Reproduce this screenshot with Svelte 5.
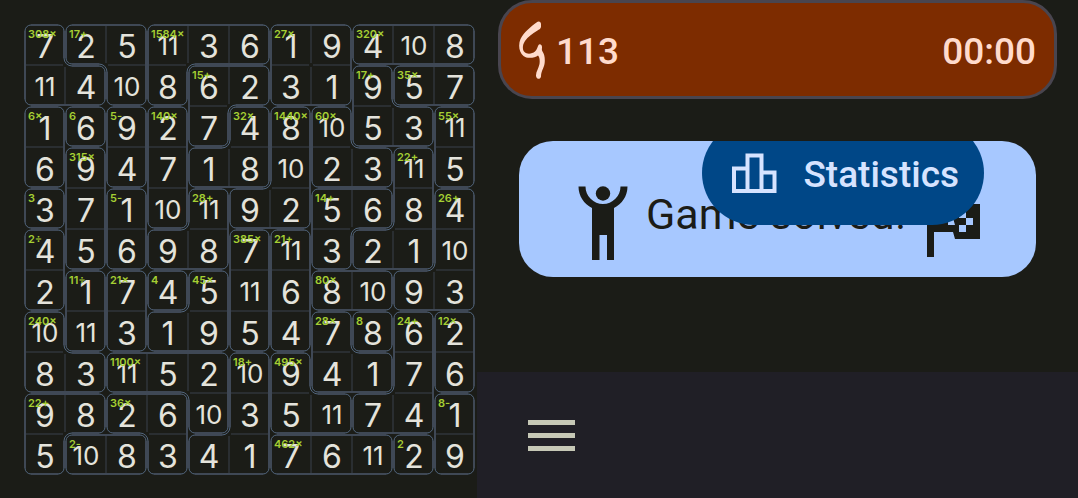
<script>
  const numbers = [
    [7, 2, 5, 11, 3, 6, 1, 9, 4, 10, 8],
    [11, 4, 10, 8, 6, 2, 3, 1, 9, 5, 7],
    [1, 6, 9, 2, 7, 4, 8, 10, 5, 3, 11],
    [6, 9, 4, 7, 1, 8, 10, 2, 3, 11, 5],
    [3, 7, 1, 10, 11, 9, 2, 5, 6, 8, 4],
    [4, 5, 6, 9, 8, 7, 11, 3, 2, 1, 10],
    [2, 1, 7, 4, 5, 11, 6, 8, 10, 9, 3],
    [10, 11, 3, 1, 9, 5, 4, 7, 8, 6, 2],
    [8, 3, 11, 5, 2, 10, 9, 4, 1, 7, 6],
    [9, 8, 2, 6, 10, 3, 5, 11, 7, 4, 1],
    [5, 10, 8, 3, 4, 1, 7, 6, 11, 2, 9],
  ];

  // Each letter is one cage; its first cell in reading order carries the clue.
  const cages = [
    'ABBCCCDDEEE',
    'AABCFFDDGHH',
    'IJKLFMNOGGP',
    'IQKLMMNOORP',
    'SQTLUNNVVRW',
    'XQTUUYZVRRW',
    'XabcdYZeeWW',
    'fabddYZghij',
    'ffkkklmggij',
    'nnooklmmiip',
    'nqqollrrrsp',
  ];

  const clues = {
    A: '308×', B: '17+', C: '1584×', D: '27×', E: '320×', F: '15+', G: '17+', H: '35×',
    I: '6×', J: '6', K: '5-', L: '140×', M: '32×', N: '1440×', O: '60×', P: '55×',
    Q: '315×', R: '22+', S: '3', T: '5-', U: '28+', V: '14+', W: '26+', X: '2÷',
    Y: '385×', Z: '21+', a: '11÷', b: '21×', c: '4', d: '45×', e: '80×', f: '240×',
    g: '28×', h: '8', i: '24+', j: '12×', k: '1100×', l: '18+', m: '495×', n: '22+',
    o: '36×', p: '8-', q: '2-', r: '462×', s: '2',
  };

  const unit = 41;
  const half = unit / 2;
  const radius = 6;
  const d = half - 1;
  const cageAt = (r, c) => cages[r]?.[c] ?? '';

  const cells = [];
  let edges = '';
  let corners = '';
  let dividers = '';
  const seen = new Set();

  for (let r = 0; r < 11; r++) {
    for (let c = 0; c < 11; c++) {
      const id = cageAt(r, c);
      cells.push({ value: numbers[r][c], clue: seen.has(id) ? '' : clues[id] });
      seen.add(id);

      const left = c * unit;
      const top = r * unit;
      const cx = left + half;
      const cy = top + half;
      const same = (dx, dy) => cageAt(r + dy, c + dx) === id;

      // Straight sides, shortened where the outline turns.
      for (const [dx, dy] of [[0, -1], [1, 0], [0, 1], [-1, 0]]) {
        if (same(dx, dy)) continue;
        const px = -dy;
        const py = dx;
        const reach = (s) => {
          const straight = same(px * s, py * s) && !same(px * s + dx, py * s + dy);
          return straight ? half : d - radius;
        };
        const x = cx + dx * d;
        const y = cy + dy * d;
        const a = reach(-1);
        const b = reach(1);
        edges += `M${x - px * a} ${y - py * a}L${x + px * b} ${y + py * b}`;
      }

      for (const [sx, sy] of [[-1, -1], [1, -1], [1, 1], [-1, 1]]) {
        const h = same(sx, 0);
        const v = same(0, sy);
        const outer = !h && !v;
        const inner = h && v && !same(sx, sy);
        if (!outer && !inner) continue;
        const size = outer ? radius : radius + 2;
        const end = outer ? d - size : d + size;
        const sweep = sx * sy > 0 ? 0 : 1;
        corners += `M${cx + sx * end} ${cy + sy * d}A${size} ${size} 0 0 ${sweep} ${cx + sx * d} ${cy + sy * end}`;
      }

      if (same(1, 0)) dividers += `M${left + unit} ${top + 2}v${unit - 4}`;
      if (same(0, 1)) dividers += `M${left + 2} ${top + unit}h${unit - 4}`;
    }
  }
</script>

<main>
  <section class="puzzle" aria-label="Puzzle">
    <div class="board">
      <svg class="lines" viewBox="0 0 451 451" aria-hidden="true">
        <path class="divider" d={dividers} />
        <path class="edge" d={edges} />
        <path class="corner" d={corners} />
      </svg>
      {#each cells as cell}
        <div class="cell">
          <span class="value" class:wide={cell.value > 9}>{cell.value}</span>
          {#if cell.clue}<span class="clue">{cell.clue}</span>{/if}
        </div>
      {/each}
    </div>
  </section>

  <section class="side">
    <header class="status">
      <svg class="mark" viewBox="0 0 28 58" aria-hidden="true">
        <path d="M18.500 1.500C20.500 -0.500 23 0.500 23 3V6C22.500 8 21 8.500 19.500 9.500C14 13 10 15.500 7 20C4 24.500 4.500 29 6.500 31C9 33.500 14 33 17 30.500C19 28.500 19.500 26 20.500 24C21.500 22.500 24 23.500 24 26C24 28 23.500 29 24.500 30.500C26.500 33 27.300 38 26.500 43C25.500 48 23 50 23 55.500C22.500 58.500 19 58.500 18.300 56C17 52 20.500 48 21.500 43C22 39 21.500 36 20 34.500C17 37 9 38 5.500 35C1 31 0 24 2.500 18C6 11 13 5.500 18.500 1.500Z" />
      </svg>
      <span class="count">113</span>
      <time>00:00</time>
    </header>

    <div class="banner">
      <svg class="person" viewBox="0 0 50 74" aria-hidden="true">
        <circle cx="25" cy="7.500" r="7.200" />
        <path d="M0.500 0.500H7.500A17.500 17.500 0 0 0 42.500 0.500H49.500C49.500 10 44 18 36 22V74H29V49H21.500V74H14V22C6 18 0.500 10 0.500 0.500Z" />
      </svg>
      <span class="message">Game solved!</span>
      <svg class="flag" viewBox="0 0 53 53" aria-hidden="true">
        <path fill-rule="evenodd" d="M0 0H25L27 6V0H53V35H28L26 28H7V53H0ZM21 14V21H28L26 14ZM32 7H39V14H32ZM39 14H46V21H39ZM32 21H39V28H32Z" />
      </svg>
      <button class="stats" type="button">
        <svg class="podium" viewBox="0 0 45 41" aria-hidden="true">
          <path d="M2 38V15.500H15.500V2.500H29.500V19.500H42.500V38ZM15.500 15V38M29.500 19V38" />
        </svg>
        <span>Statistics</span>
      </button>
    </div>

    <nav>
      <button class="menu" type="button" aria-label="Menu">
        <i></i><i></i><i></i>
      </button>
    </nav>
  </section>
</main>

<style>
  :global(body) {
    background: #1b1c17;
  }

  main {
    display: grid;
    grid-template-columns: minmax(0, 477fr) minmax(0, 601fr);
    min-height: 100vh;
    font-family: Roboto, sans-serif;
    font-weight: 500;
  }

  button {
    border: 0;
    padding: 0;
    font: inherit;
    cursor: pointer;
  }

  .puzzle {
    padding: 24px 2px 0 24px;
  }

  .board {
    position: relative;
    display: grid;
    grid-template-columns: repeat(11, minmax(0, 1fr));
    font-family: Inter, sans-serif;
    font-weight: 400;
    color: #e4e3db;
  }

  .lines {
    position: absolute;
    inset: 0;
    width: 100%;
    height: 100%;
    fill: none;
  }

  .divider {
    stroke: #2a2e31;
    stroke-width: 2;
  }

  .edge {
    stroke: #3f4855;
    stroke-width: 2;
  }

  .corner {
    stroke: #52667e;
    stroke-width: 1;
  }

  .cell {
    position: relative;
    display: flex;
    align-items: center;
    justify-content: center;
    box-sizing: border-box;
    aspect-ratio: 1;
    padding: 4px 0 0 1px;
  }

  .clue {
    position: absolute;
    top: 3px;
    left: 4px;
    font-size: 11px;
    line-height: 14px;
    font-weight: 600;
    color: #a5cf33;
  }

  .value {
    font-size: 32px;
    line-height: 36px;
  }

  .wide {
    padding-bottom: 2px;
    font-size: 26px;
    line-height: 32px;
  }

  .side {
    display: flex;
    flex-direction: column;
  }

  .status {
    display: flex;
    align-items: center;
    box-sizing: border-box;
    height: 99px;
    margin: 0 21px;
    padding: 0 18px 0 17px;
    border: 3px solid #49454f;
    border-radius: 34px;
    background: #7d2c00;
    color: #ffdbcc;
    font-size: 37px;
    line-height: 42px;
  }

  .mark {
    width: 28px;
    height: 58px;
    margin-right: 10px;
    fill: currentColor;
  }

  .count,
  time,
  .stats span {
    padding-top: 4px;
  }

  time {
    margin-left: auto;
  }

  .banner {
    position: relative;
    display: flex;
    align-items: center;
    box-sizing: border-box;
    height: 136px;
    margin: 42px 42px 0;
    padding: 12px 56px 0 59px;
    border-radius: 34px;
    background: #a7c8ff;
    color: #1b1c17;
    overflow: hidden;
  }

  .person {
    width: 50px;
    height: 74px;
    margin: 16px 18px 0 0;
    fill: currentColor;
  }

  .message {
    padding-bottom: 2px;
    font-size: 43px;
    line-height: 48px;
    font-weight: 400;
    white-space: nowrap;
  }

  .flag {
    width: 53px;
    height: 53px;
    margin: 30px 0 0 auto;
    fill: currentColor;
  }

  .stats {
    position: absolute;
    top: -20px;
    right: 52px;
    display: flex;
    align-items: center;
    gap: 26px;
    height: 104px;
    padding: 0 25px 0 30px;
    border-radius: 52px;
    background: #004787;
    color: #d6e3ff;
    font-size: 37px;
    line-height: 42px;
  }

  .podium {
    width: 45px;
    height: 41px;
    fill: none;
    stroke: currentColor;
    stroke-width: 4;
  }

  nav {
    flex: 1;
    display: flex;
    align-items: center;
    margin-top: 95px;
    padding: 0 51px;
    background: #201f26;
  }

  .menu {
    display: grid;
    gap: 8px;
    width: 47px;
    background: none;
  }

  .menu i {
    height: 5px;
    background: #c6c8b6;
  }
</style>
